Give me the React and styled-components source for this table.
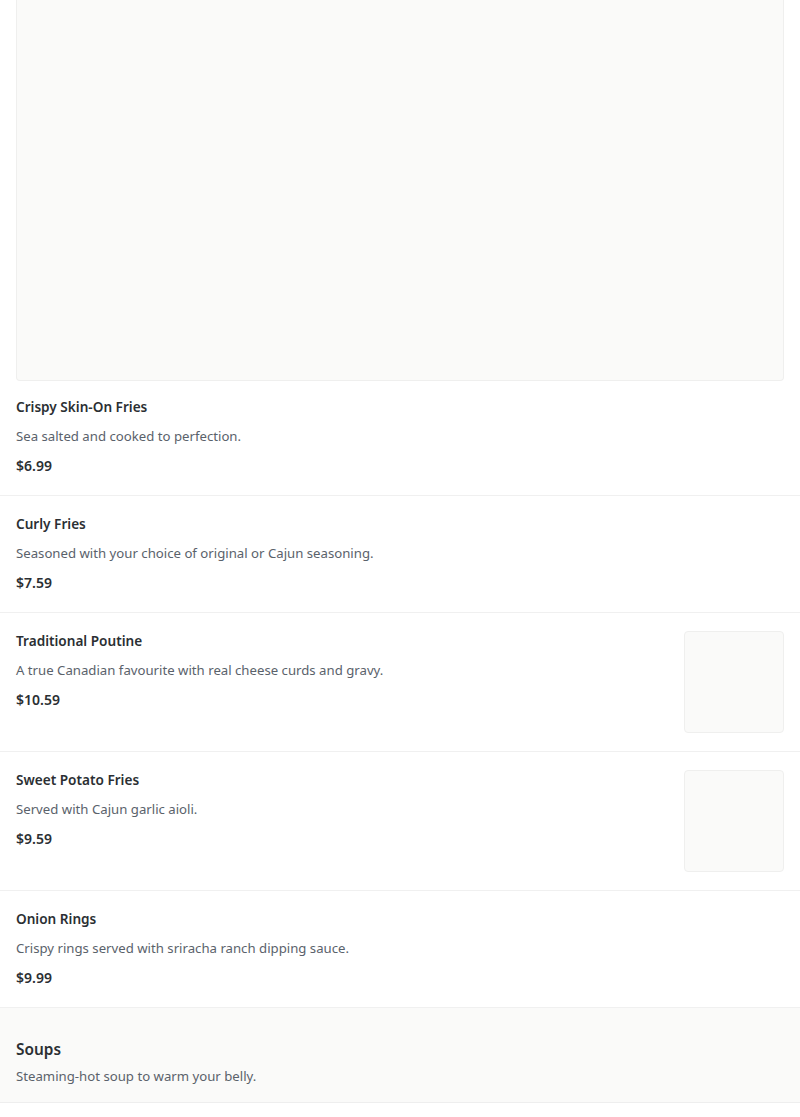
import React from "react";
import styled, { createGlobalStyle } from "styled-components";

const Global = createGlobalStyle`
  html, body { margin: 0; padding: 0; background: #fff; }
  body { font-family: "Noto Sans", "Open Sans", sans-serif; -webkit-font-smoothing: antialiased; }
`;

const Page = styled.div`
  width: 800px;
  display: flex;
  flex-direction: column;
`;

const Hero = styled.div`
  margin: 0 16px;
  height: 381px;
  box-sizing: border-box;
  background: #fafaf9;
  border: 1px solid #efefee;
  border-top: 0;
  border-radius: 0 0 4px 4px;
`;

const Item = styled.div`
  display: flex;
  align-items: flex-start;
  justify-content: space-between;
  gap: 16px;
  padding: ${(p) => (p.$first ? "16px" : "18px")} 16px ${(p) => (p.$img ? "18px" : "19px")};
  border-bottom: 1px solid #f0f0f0;
`;

const Info = styled.div`
  display: flex;
  flex-direction: column;
`;

const Title = styled.div`
  font-size: 13.6px;
  line-height: 20px;
  font-weight: 600;
  color: #2b2f33;
`;

const Desc = styled.div`
  margin-top: 9px;
  font-size: 13.2px;
  line-height: 20px;
  color: #5a626b;
`;

const Price = styled.div`
  margin-top: 10px;
  font-size: 14px;
  line-height: 20px;
  font-weight: 600;
  color: #2b2f33;
`;

const Thumb = styled.div`
  flex: none;
  width: 100px;
  height: 102px;
  box-sizing: border-box;
  background: #fafaf9;
  border: 1px solid #efefee;
  border-radius: 4px;
`;

const Section = styled.div`
  background: #fafaf9;
  padding: 31px 16px 16px;
  border-bottom: 1px solid #eeeeee;
`;

const SectionTitle = styled.div`
  font-size: 15.4px;
  line-height: 22px;
  font-weight: 600;
  color: #2b2f33;
`;

const SectionDesc = styled.div`
  margin-top: 5px;
  font-size: 13.2px;
  line-height: 20px;
  color: #5a626b;
`;

const items = [
  { t: "Crispy Skin-On Fries", d: "Sea salted and cooked to perfection.", p: "$6.99" },
  { t: "Curly Fries", d: "Seasoned with your choice of original or Cajun seasoning.", p: "$7.59" },
  { t: "Traditional Poutine", d: "A true Canadian favourite with real cheese curds and gravy.", p: "$10.59", img: true },
  { t: "Sweet Potato Fries", d: "Served with Cajun garlic aioli.", p: "$9.59", img: true },
  { t: "Onion Rings", d: "Crispy rings served with sriracha ranch dipping sauce.", p: "$9.99" },
];

export default function App() {
  return (
    <Page>
      <Global />
      <Hero />
      {items.map((it, i) => (
        <Item key={it.t} $first={i === 0} $img={!!it.img}>
          <Info>
            <Title>{it.t}</Title>
            <Desc>{it.d}</Desc>
            <Price>{it.p}</Price>
          </Info>
          {it.img && <Thumb />}
        </Item>
      ))}
      <Section>
        <SectionTitle>Soups</SectionTitle>
        <SectionDesc>Steaming-hot soup to warm your belly.</SectionDesc>
      </Section>
    </Page>
  );
}
